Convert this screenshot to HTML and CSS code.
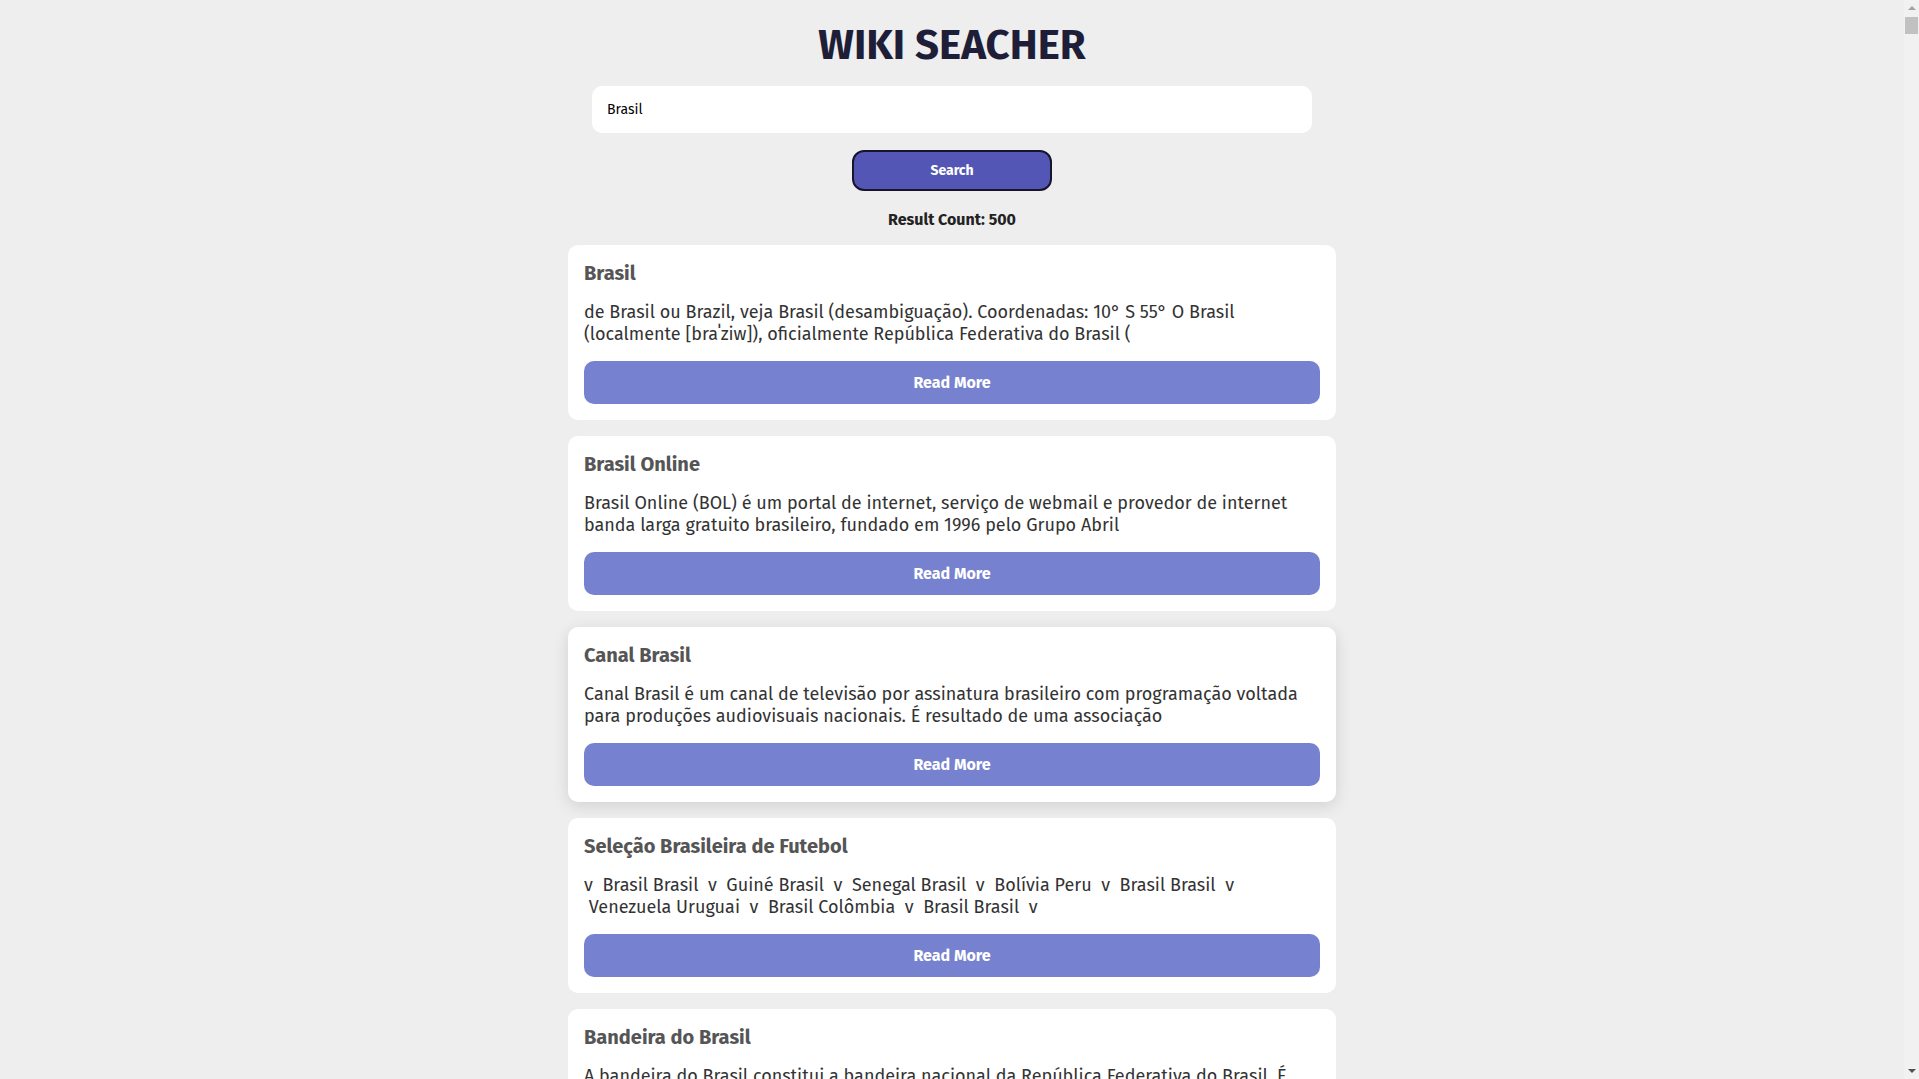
FILE: index.html
```html
<!DOCTYPE html>
<html lang="pt-BR">
<head>
<meta charset="utf-8">
<title>Wiki Seacher</title>
<link rel="stylesheet" href="styles.css">
</head>
<body>
<main class="app">
  <h1 class="app-title">WIKI SEACHER</h1>
  <input class="search-input" type="text" value="Brasil">
  <button class="search-btn" type="button">Search</button>
  <p class="result-count">Result Count: 500</p>
  <section class="results">
    <article class="card">
      <h2 class="card-title">Brasil</h2>
      <p class="card-text">de Brasil ou Brazil, veja Brasil (desambiguação). Coordenadas: 10° S 55° O Brasil (localmente [braˈziw]), oficialmente República Federativa do Brasil (</p>
      <button class="read-more" type="button">Read More</button>
    </article>
    <article class="card">
      <h2 class="card-title">Brasil Online</h2>
      <p class="card-text">Brasil Online (BOL) é um portal de internet, serviço de webmail e provedor de internet banda larga gratuito brasileiro, fundado em 1996 pelo Grupo Abril</p>
      <button class="read-more" type="button">Read More</button>
    </article>
    <article class="card card-hover">
      <h2 class="card-title">Canal Brasil</h2>
      <p class="card-text">Canal Brasil é um canal de televisão por assinatura brasileiro com programação voltada para produções audiovisuais nacionais. É resultado de uma associação</p>
      <button class="read-more" type="button">Read More</button>
    </article>
    <article class="card">
      <h2 class="card-title">Seleção Brasileira de Futebol</h2>
      <p class="card-text">v &nbsp;Brasil Brasil &nbsp;v &nbsp;Guiné Brasil &nbsp;v &nbsp;Senegal Brasil &nbsp;v &nbsp;Bolívia Peru &nbsp;v &nbsp;Brasil Brasil &nbsp;v &nbsp;Venezuela Uruguai &nbsp;v &nbsp;Brasil Colômbia &nbsp;v &nbsp;Brasil Brasil &nbsp;v</p>
      <button class="read-more" type="button">Read More</button>
    </article>
    <article class="card">
      <h2 class="card-title">Bandeira do Brasil</h2>
      <p class="card-text">A bandeira do Brasil constitui a bandeira nacional da República Federativa do Brasil. É composta por um retângulo verde e um losango amarelo</p>
      <button class="read-more" type="button">Read More</button>
    </article>
    <article class="card">
      <h2 class="card-title">Império do Brasil</h2>
      <p class="card-text">O Império do Brasil foi um Estado monárquico que existiu no século XIX e que compreendia, aproximadamente, o território que forma o Brasil</p>
      <button class="read-more" type="button">Read More</button>
    </article>
  </section>
</main>
<div class="scrollbar" aria-hidden="true">
  <span class="scroll-arrow scroll-arrow-up"></span>
  <span class="scroll-thumb"></span>
  <span class="scroll-arrow scroll-arrow-down"></span>
</div>
</body>
</html>
```
FILE: styles.css
```css
* { box-sizing: border-box; }

html, body {
  margin: 0;
  padding: 0;
}

body {
  background: #eeeeee;
  font-family: "Fira Sans", Roboto, "Noto Sans", sans-serif;
  color: #222;
  padding-right: 15px;
}

.app {
  display: flex;
  flex-direction: column;
  align-items: center;
  padding: 21px 0 40px;
}

.app-title {
  margin: 0 0 17px;
  font-size: 42px;
  line-height: 48px;
  font-weight: 700;
  color: #1e1e38;
}

.search-input {
  width: 720px;
  height: 47px;
  border: none;
  border-radius: 10px;
  background: #ffffff;
  padding: 0 15px;
  font-family: inherit;
  font-size: 14px;
  color: #000;
  outline: none;
}

.search-btn {
  margin-top: 17px;
  width: 200px;
  height: 41px;
  background: #5356b5;
  border: 2px solid #16162a;
  border-radius: 12px;
  color: #ffffff;
  font-family: inherit;
  font-size: 14px;
  font-weight: 700;
}

.result-count {
  margin: 19px 0 15px;
  font-size: 16px;
  line-height: 20px;
  font-weight: 700;
  color: #222;
}

.results {
  width: 768px;
  display: flex;
  flex-direction: column;
  gap: 16px;
}

.card {
  background: #ffffff;
  border-radius: 10px;
  padding: 16px;
  display: flex;
  flex-direction: column;
}

.card-hover {
  box-shadow: 0 4px 16px rgba(0, 0, 0, 0.12);
}

.card-title {
  margin: 0;
  font-size: 20px;
  line-height: 24px;
  font-weight: 700;
  color: #555555;
}

.card-text {
  margin: 16px 0 16px;
  font-size: 18px;
  line-height: 22px;
  color: #333333;
}

.read-more {
  width: 100%;
  height: 43px;
  border: none;
  border-radius: 10px;
  background: #7682cf;
  color: #ffffff;
  font-family: inherit;
  font-size: 16px;
  font-weight: 700;
}

.scrollbar {
  position: fixed;
  top: 0;
  right: 0;
  width: 15px;
  height: 100vh;
  background: #f1f1f1;
  display: flex;
  flex-direction: column;
  align-items: center;
}

.scroll-arrow {
  width: 0;
  height: 0;
  border-left: 4px solid transparent;
  border-right: 4px solid transparent;
}

.scroll-arrow-up {
  margin-top: 6px;
  border-bottom: 4px solid #a3a3a3;
}

.scroll-arrow-down {
  margin-top: auto;
  margin-bottom: 6px;
  border-top: 4px solid #505050;
}

.scroll-thumb {
  margin-top: 7px;
  width: 13px;
  height: 17px;
  background: #c1c1c1;
}
```
